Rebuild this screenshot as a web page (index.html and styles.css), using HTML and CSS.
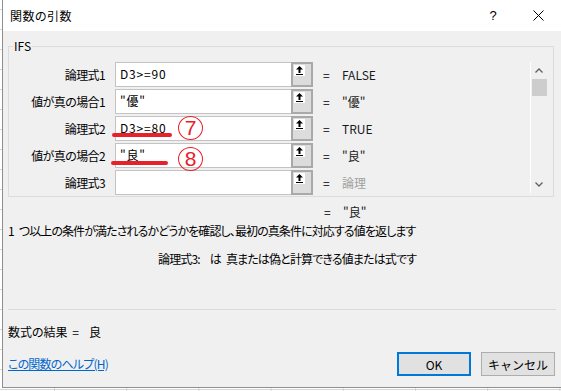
FILE: index.html
```html
<!DOCTYPE html>
<html lang="ja">
<head>
  <meta charset="UTF-8">
  <title>関数の引数</title>
  <link rel="stylesheet" href="styles.css">
</head>
<body>

<div class="dialog">
  <div class="titlebar">
    <span class="title">関数の引数</span>
    <span class="cap-btn help-btn">?</span>
    <span class="cap-btn close-btn">
      <svg width="11" height="11" viewBox="0 0 11 11"><path d="M0.5 0.5 L10.5 10.5 M10.5 0.5 L0.5 10.5" stroke="#000" stroke-width="1" fill="none"/></svg>
    </span>
  </div>

  <div class="main">
    <fieldset class="group">
      <legend>IFS</legend>
      <div class="group-inner">
        <div class="args">
          <div class="row">
            <label>論理式1</label>
            <div class="input">D3&gt;=90</div>
            <span class="ref"><i><svg width="7" height="9" viewBox="0 0 7 9"><path d="M3.5 0 L7 3.5 L4.5 3.5 L4.5 7 L2.5 7 L2.5 3.5 L0 3.5 Z" fill="#000"/><rect x="0" y="8" width="7" height="1" fill="#000"/></svg></i></span>
            <span class="eq">=</span>
            <span class="val">FALSE</span>
          </div>
          <div class="row">
            <label>値が真の場合1</label>
            <div class="input">"優"</div>
            <span class="ref"><i><svg width="7" height="9" viewBox="0 0 7 9"><path d="M3.5 0 L7 3.5 L4.5 3.5 L4.5 7 L2.5 7 L2.5 3.5 L0 3.5 Z" fill="#000"/><rect x="0" y="8" width="7" height="1" fill="#000"/></svg></i></span>
            <span class="eq">=</span>
            <span class="val">"優"</span>
          </div>
          <div class="row">
            <label>論理式2</label>
            <div class="input">D3&gt;=80</div>
            <span class="ref"><i><svg width="7" height="9" viewBox="0 0 7 9"><path d="M3.5 0 L7 3.5 L4.5 3.5 L4.5 7 L2.5 7 L2.5 3.5 L0 3.5 Z" fill="#000"/><rect x="0" y="8" width="7" height="1" fill="#000"/></svg></i></span>
            <span class="eq">=</span>
            <span class="val">TRUE</span>
          </div>
          <div class="row">
            <label>値が真の場合2</label>
            <div class="input">"良"</div>
            <span class="ref"><i><svg width="7" height="9" viewBox="0 0 7 9"><path d="M3.5 0 L7 3.5 L4.5 3.5 L4.5 7 L2.5 7 L2.5 3.5 L0 3.5 Z" fill="#000"/><rect x="0" y="8" width="7" height="1" fill="#000"/></svg></i></span>
            <span class="eq">=</span>
            <span class="val">"良"</span>
          </div>
          <div class="row">
            <label>論理式3</label>
            <div class="input"></div>
            <span class="ref"><i><svg width="7" height="9" viewBox="0 0 7 9"><path d="M3.5 0 L7 3.5 L4.5 3.5 L4.5 7 L2.5 7 L2.5 3.5 L0 3.5 Z" fill="#000"/><rect x="0" y="8" width="7" height="1" fill="#000"/></svg></i></span>
            <span class="eq">=</span>
            <span class="val muted">論理</span>
          </div>

          <!-- red annotations drawn over the dialog -->
          <span class="mark mark-line line7"></span>
          <span class="mark circle circle7">7</span>
          <span class="mark mark-line line8"></span>
          <span class="mark circle circle8">8</span>
        </div>

        <div class="scroll">
          <span class="arrow">
            <svg width="8" height="5" viewBox="0 0 8 5"><path d="M0.5 4.5 L4 1 L7.5 4.5" stroke="#606060" stroke-width="1.3" fill="none"/></svg>
          </span>
          <span class="thumb"></span>
          <span class="track"></span>
          <span class="arrow">
            <svg width="8" height="5" viewBox="0 0 8 5"><path d="M0.5 0.5 L4 4 L7.5 0.5" stroke="#606060" stroke-width="1.3" fill="none"/></svg>
          </span>
        </div>
      </div>
    </fieldset>

    <div class="total"><span class="eq">=</span><span class="val">"良"</span></div>
    <p class="desc">1<span class="gap"></span>つ以上の条件が満たされるかどうかを確認し、最初の真条件に対応する値を返します</p>
    <p class="arg-help"><span class="arg-name">論理式3:</span>は<span class="gap"></span>真または偽と計算できる値または式です</p>

    <hr class="sep">

    <p class="result">数式の結果 <span class="res-eq">=</span>良</p>

    <div class="footer">
      <a class="help-link" href="#">この関数のヘルプ(H)</a>
      <button class="btn btn-ok">OK</button>
      <button class="btn">キャンセル</button>
    </div>
  </div>
</div>

</body>
</html>
```

FILE: styles.css
```css
* {
  box-sizing: border-box;
}

html, body {
  height: 100%;
}

body {
  margin: 0;
  overflow: hidden;
  font-family: "Noto Sans CJK JP", "Noto Sans", sans-serif;
  font-size: 12px;
  line-height: 16px;
  color: #000;
  font-feature-settings: "palt";
  background-color: #fff;
  background-image:
    linear-gradient(to right, #d6d6d6 1px, transparent 1px),
    linear-gradient(to bottom, #d6d6d6 1px, transparent 1px);
  background-size: 72.2px 100%, 100% 20px;
  background-position: 54px 0, 0 9px;
}

.dialog {
  margin-left: 2px;
  width: 559px;
  height: 388px;
  border-left: 1px solid #8f8f8f;
  border-bottom: 1px solid #8f8f8f;
  display: flex;
  flex-direction: column;
}

.titlebar {
  height: 31px;
  background: #fff;
  display: flex;
  align-items: center;
  padding-left: 7px;
}

.title {
  flex: 1;
  letter-spacing: 0.5px;
}

.cap-btn {
  height: 31px;
  display: flex;
  align-items: center;
  justify-content: center;
}

.help-btn {
  width: 44px;
  font-size: 13px;
  font-family: "Liberation Sans", sans-serif;
}

.close-btn {
  width: 46px;
}

.main {
  flex: 1;
  background: #f0f0f0;
  padding: 0 5px;
}

/* argument group */
.group {
  margin: 7px 2px 0 0;
  padding: 0 6px 1px 0;
  border: 1px solid #dcdcdc;
}

.group legend {
  margin-left: 4px;
  padding: 0 1px;
  line-height: 16px;
}

.group-inner {
  display: flex;
}

.args {
  position: relative;
  flex: 1;
  padding-top: 8px;
  display: flex;
  flex-direction: column;
  gap: 2px;
}

.row {
  display: flex;
  align-items: center;
  height: 25px;
}

.row label {
  width: 96px;
  margin-right: 10px;
  text-align: right;
  letter-spacing: -0.6px;
}

.input {
  width: 176px;
  height: 25px;
  background: #fff;
  border: 1px solid #c3c3c3;
  border-right: none;
  padding: 3px 4px 0;
  letter-spacing: 0.8px;
}

.ref {
  width: 22px;
  height: 25px;
  border: 2px solid #a9a9a9;
  background: #dcdcdc;
  padding: 1px;
}

.ref i {
  display: flex;
  align-items: center;
  justify-content: center;
  width: 11px;
  height: 11px;
  background: #fff;
}

.eq {
  margin-left: 10px;
  width: 8px;
}

.val {
  margin-left: 11px;
  color: #1a1a1a;
}

.muted {
  color: #a0a0a0;
}

/* red annotations */
.mark {
  position: absolute;
}

.mark-line {
  height: 4px;
  border-radius: 2px;
  background: #e8202a;
}

.line7 {
  left: 103px;
  top: 79px;
  width: 60px;
}

.line8 {
  left: 102px;
  top: 107px;
  width: 57px;
}

.circle {
  width: 25px;
  height: 24px;
  border: 1.5px solid #e8202a;
  border-radius: 50%;
  color: #e8202a;
  font-family: "Liberation Sans", sans-serif;
  font-size: 21px;
  line-height: 21px;
  text-align: center;
}

.circle7 {
  left: 169px;
  top: 62px;
}

.circle8 {
  left: 169px;
  top: 93px;
}

/* scrollbar */
.scroll {
  width: 17px;
  margin-top: 8px;
  height: 131px;
  border-left: 1px solid #fff;
  display: flex;
  flex-direction: column;
  align-items: center;
}

.arrow {
  height: 17px;
  display: flex;
  align-items: center;
  justify-content: center;
}

.thumb {
  width: 15px;
  height: 17px;
  background: #cdcdcd;
}

.track {
  flex: 1;
}

/* texts below the group */
.total {
  margin-top: 7px;
  padding-left: 306px;
  display: flex;
}

.desc {
  margin: 3px 0 0;
  letter-spacing: -0.9px;
}

.arg-help {
  margin: 12px 0 0;
  padding-left: 150px;
  letter-spacing: -0.85px;
}

.gap {
  display: inline-block;
  width: 5px;
}

.arg-name {
  margin-right: 10px;
}

.sep {
  margin: 42px 0 0;
  border: none;
  border-top: 1px solid #dadada;
}

.result {
  margin: 14px 0 0;
}

.res-eq {
  margin: 0 10px 0 2px;
}

.footer {
  margin-top: 12px;
  display: flex;
  align-items: center;
  gap: 10px;
  padding-right: 1px;
}

.help-link {
  flex: 1;
  color: #0066cc;
  text-decoration: underline;
  letter-spacing: -0.8px;
}

.btn {
  width: 74px;
  height: 24px;
  font-family: inherit;
  font-size: 12px;
  background: #e1e1e1;
  border: 1px solid #adadad;
  color: #000;
  padding: 0;
}

.btn-ok {
  border: 2px solid #0078d7;
}
```
